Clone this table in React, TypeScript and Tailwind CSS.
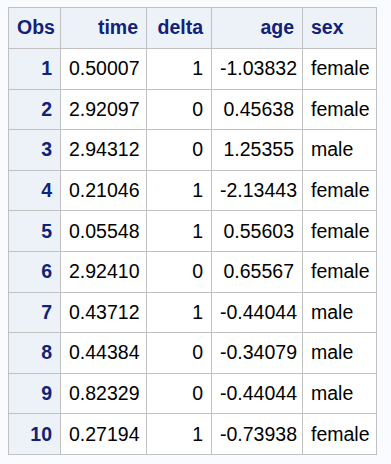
const rows = [
  { obs: 1, time: "0.50007", delta: 1, age: "-1.03832", sex: "female" },
  { obs: 2, time: "2.92097", delta: 0, age: "0.45638", sex: "female" },
  { obs: 3, time: "2.94312", delta: 0, age: "1.25355", sex: "male" },
  { obs: 4, time: "0.21046", delta: 1, age: "-2.13443", sex: "female" },
  { obs: 5, time: "0.05548", delta: 1, age: "0.55603", sex: "female" },
  { obs: 6, time: "2.92410", delta: 0, age: "0.65567", sex: "female" },
  { obs: 7, time: "0.43712", delta: 1, age: "-0.44044", sex: "male" },
  { obs: 8, time: "0.44384", delta: 0, age: "-0.34079", sex: "male" },
  { obs: 9, time: "0.82329", delta: 0, age: "-0.44044", sex: "male" },
  { obs: 10, time: "0.27194", delta: 1, age: "-0.73938", sex: "female" },
]

export default function App() {
  const th = "border border-[#c1c1c1] bg-[#edf2f9] text-[#112277] font-bold px-2"
  const td = "border border-[#c1c1c1] bg-white text-black px-2"

  return (
    <div className="min-h-screen bg-[#fafbfe] pt-[7px] pl-[8px] font-['Liberation_Sans',Arial,sans-serif] text-[19.5px]">
      <table className="border-collapse table-fixed w-[368px]">
        <colgroup>
          <col className="w-[52px]" />
          <col className="w-[86px]" />
          <col className="w-[65px]" />
          <col className="w-[91px]" />
          <col className="w-[74px]" />
        </colgroup>
        <thead>
          <tr className="h-[41px]">
            <th className={`${th} text-center`}>Obs</th>
            <th className={`${th} text-right`}>time</th>
            <th className={`${th} text-right`}>delta</th>
            <th className={`${th} text-right`}>age</th>
            <th className={`${th} text-left`}>sex</th>
          </tr>
        </thead>
        <tbody>
          {rows.map((r) => (
            <tr key={r.obs} className="h-[40.6px]">
              <th className={`${th} text-right`}>{r.obs}</th>
              <td className={`${td} text-right`}>{r.time}</td>
              <td className={`${td} text-right`}>{r.delta}</td>
              <td className={`${td} text-right`}>{r.age}</td>
              <td className={`${td} text-left`}>{r.sex}</td>
            </tr>
          ))}
        </tbody>
      </table>
    </div>
  )
}
